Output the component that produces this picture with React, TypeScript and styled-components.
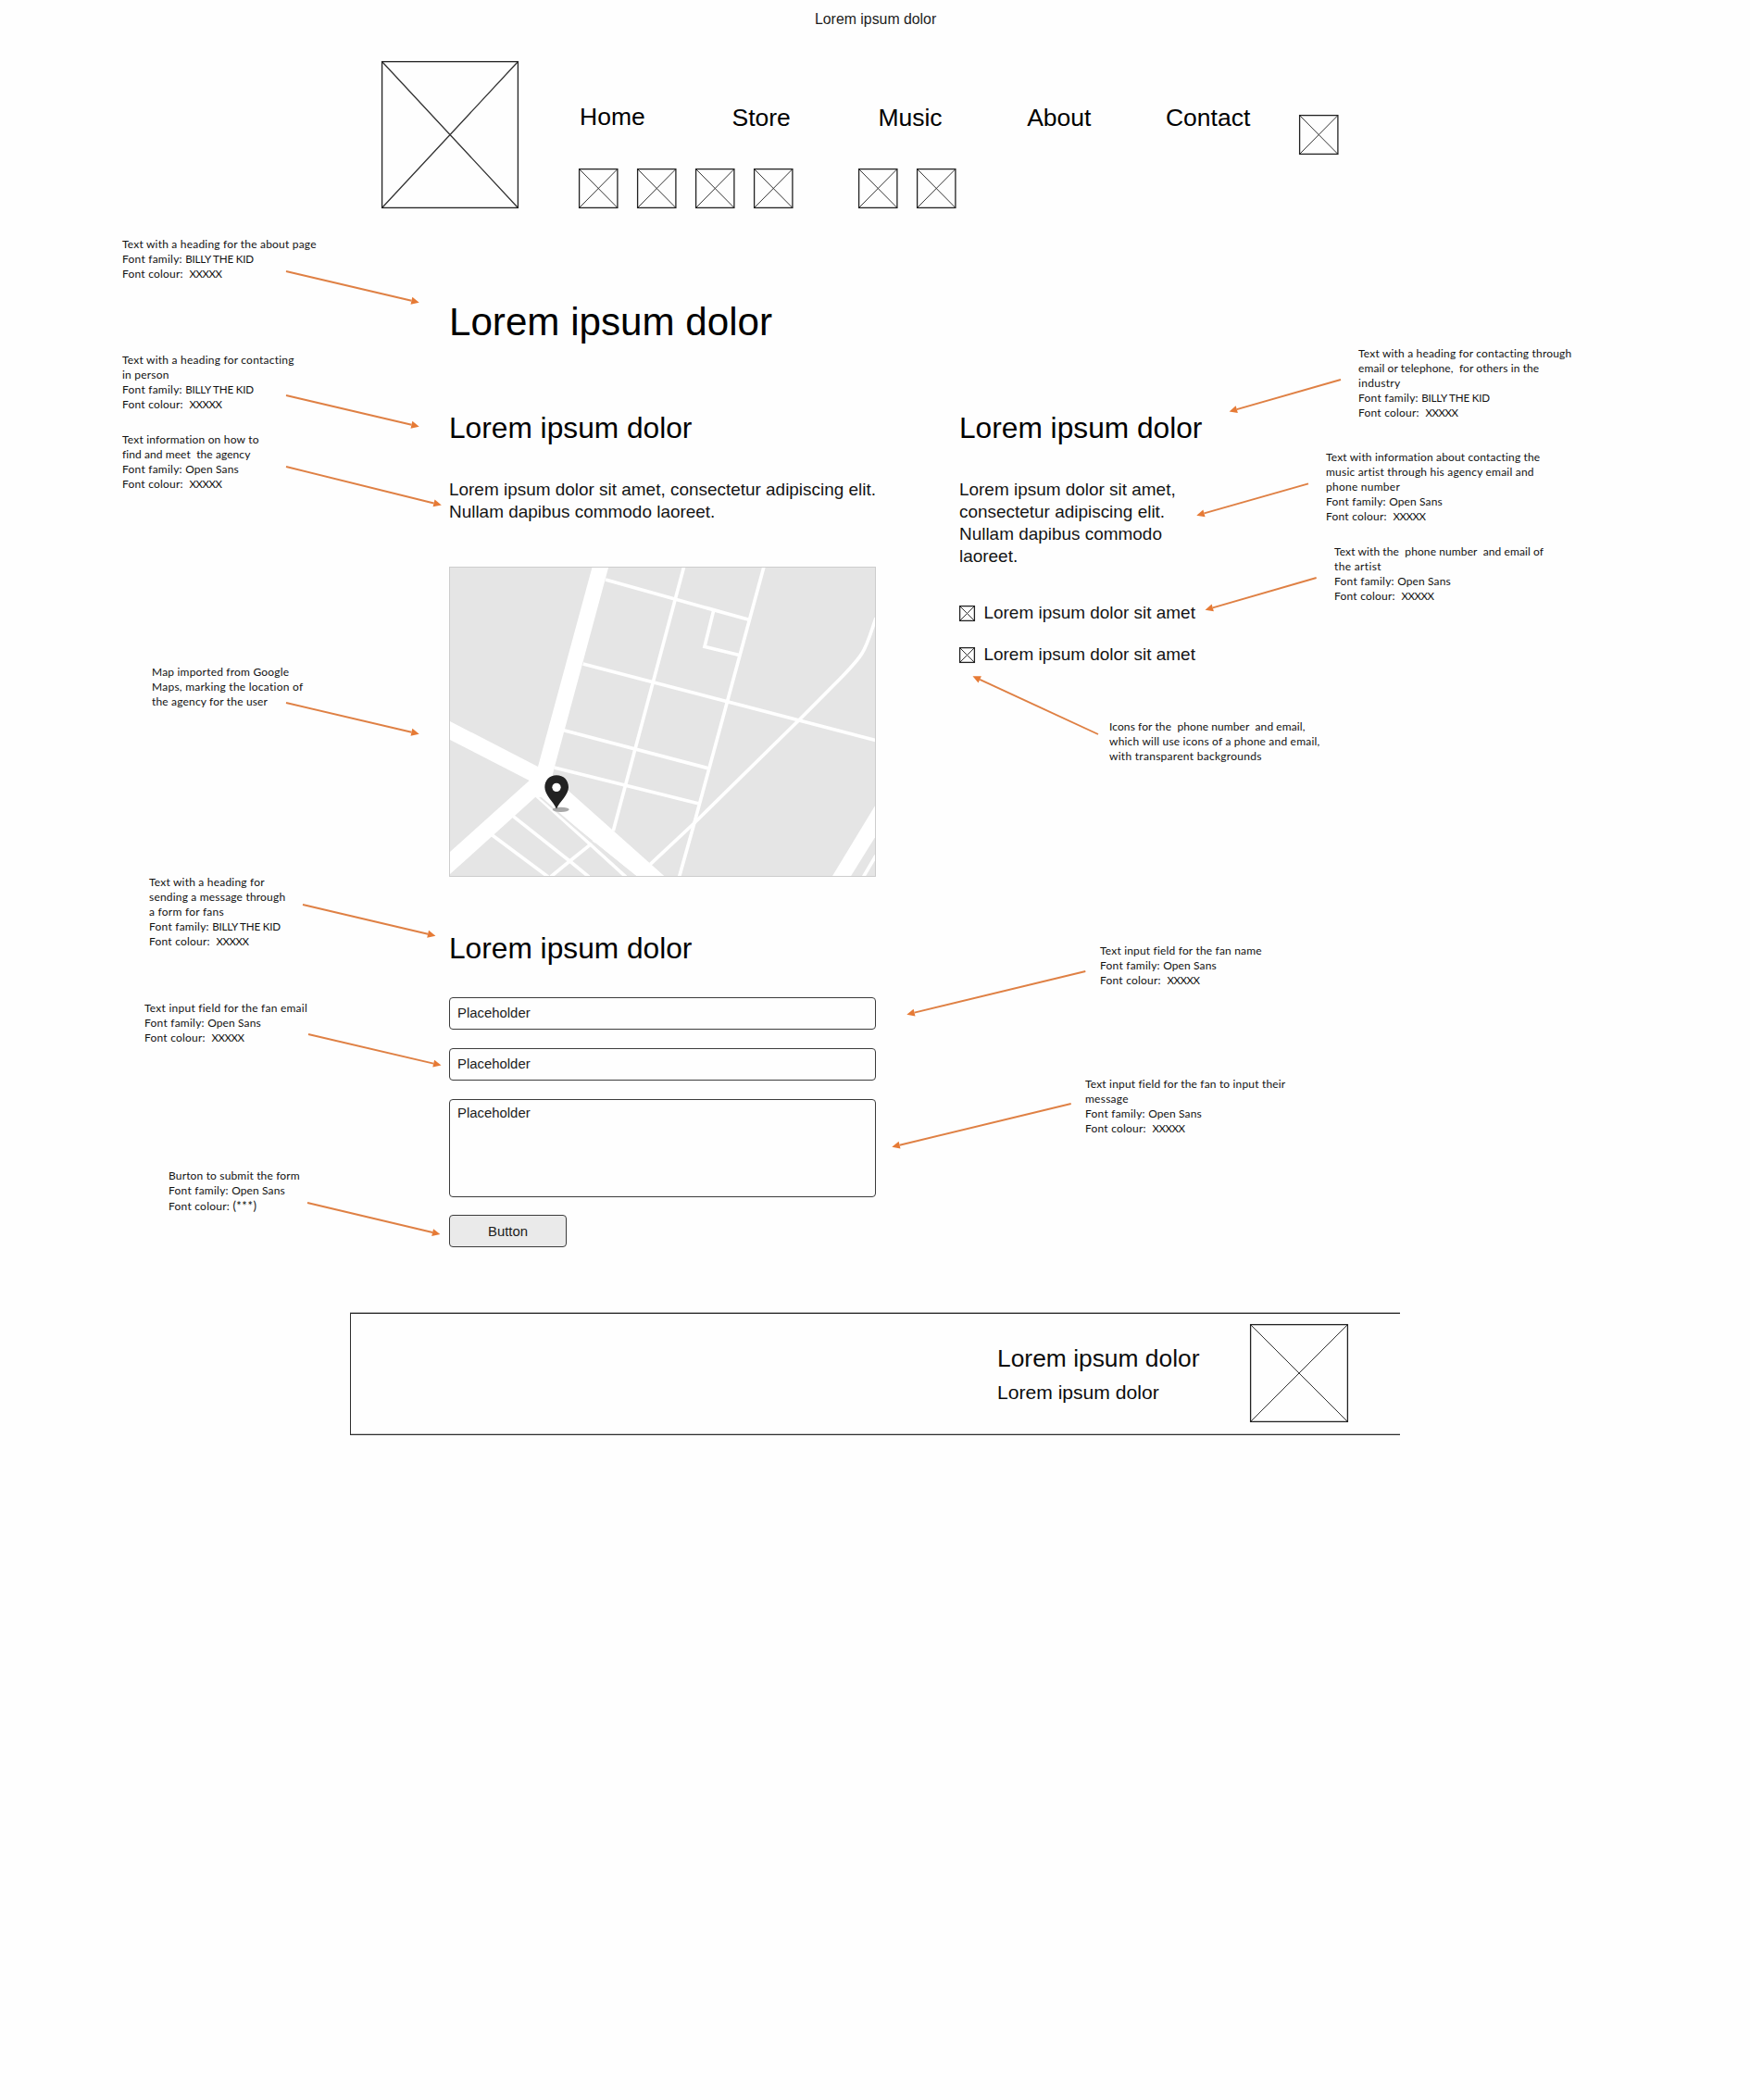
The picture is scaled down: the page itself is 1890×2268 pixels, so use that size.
import React from "react";
import styled, { createGlobalStyle } from "styled-components";

const GlobalStyle = createGlobalStyle`
  body {
    margin: 0;
    background: #fefefe;
    color: #0c0c0c;
    font-family: "Liberation Sans", Arial, sans-serif;
  }
  h1, h2, p { margin: 0; font-weight: 400; }
`;

const Page = styled.div`
  position: relative;
  width: 1890px;
  height: 2268px;
  overflow: hidden;
`;

const TitleBar = styled.div`
  box-sizing: border-box;
  height: 66px;
  padding-top: 9px;
  padding-left: 880px;
  font-size: 15.85px;
  line-height: 24px;
  color: #1c1c1c;
`;

const Header = styled.header`
  display: flex;
  align-items: flex-start;
  height: 159px;
  padding-left: 412px;
`;

const NavColumn = styled.div`
  display: flex;
  flex-direction: column;
  justify-content: space-between;
  box-sizing: border-box;
  width: 804px;
  height: 159px;
  margin-left: 21px;
  padding-top: 44px;
`;

const NavLinks = styled.nav`
  display: grid;
  grid-template-columns: repeat(5, 1fr);
  text-align: center;
  font-size: 26.5px;
  line-height: 32px;
`;

const NavLink = styled.a<{ $lift?: boolean }>`
  color: #000;
  padding-bottom: 1px;
  margin-top: ${(p) => (p.$lift ? "0" : "1px")};
`;

const IconStrip = styled.div`
  display: flex;
  padding-left: 44px;
`;

const IconGroup = styled.div<{ $gap: number }>`
  display: flex;
  gap: ${(p) => p.$gap}px;
  & + & { margin-left: 70.5px; }
`;

const HeaderAction = styled.div`
  padding-top: 58px;
  margin-left: 17.5px;
`;

const Main = styled.main`
  display: grid;
  grid-template-columns: 461px 264px;
  column-gap: 90px;
  align-items: start;
  align-content: start;
  padding: 98px 0 0 485px;
  height: 1193px;
  box-sizing: border-box;
`;

const Heading = styled.h1`
  grid-column: 1 / -1;
  height: 120px;
  font-size: 42.15px;
  line-height: 50px;
  color: #000;
`;

const Column = styled.section`
  display: flex;
  flex-direction: column;
  align-items: flex-start;
`;

const SubHeading = styled.h2<{ $height: number }>`
  height: ${(p) => p.$height}px;
  font-size: 31.7px;
  line-height: 38px;
  color: #000;
  white-space: nowrap;
`;

const Paragraph = styled.p<{ $height: number }>`
  height: ${(p) => p.$height}px;
  font-size: 18.95px;
  line-height: 24.1px;
  white-space: pre;
  color: #141414;
`;

const MapFrame = styled.div`
  width: 461px;
  height: 335px;
  margin-bottom: 58px;
  svg { display: block; }
`;

const Field = styled.div<{ $height: number; $top: number }>`
  box-sizing: border-box;
  width: 461px;
  height: ${(p) => p.$height}px;
  margin-bottom: 19.7px;
  padding: ${(p) => p.$top}px 8px;
  border: 1px solid #3c3c3c;
  border-radius: 4px;
  font-size: 14.9px;
  line-height: 24.5px;
  color: #1c1c1c;
`;

const Button = styled.button`
  box-sizing: border-box;
  width: 127px;
  height: 35px;
  padding: 0;
  border: 1px solid #3c3c3c;
  border-radius: 4px;
  background: #eaeaea;
  font: 14.9px "Liberation Sans", Arial, sans-serif;
  color: #1c1c1c;
`;

const ContactList = styled.div`
  display: flex;
  flex-direction: column;
  gap: 21px;
`;

const ContactRow = styled.div`
  display: flex;
  align-items: center;
  gap: 9.5px;
  height: 24px;
  font-size: 18.95px;
  line-height: 24px;
  color: #141414;
  white-space: nowrap;
`;

const Footer = styled.footer`
  display: flex;
  box-sizing: border-box;
  width: 1134px;
  height: 132px;
  margin-left: 378px;
  padding: 11px 56px 0 0;
  justify-content: flex-end;
  border: 1px solid #2e2e2e;
  border-right: 0;
  box-shadow: 0 -1px 0 #a8a8a8, inset 0 -1px 0 #c4c4c4;
`;

const FooterText = styled.div`
  width: 273px;
  padding-top: 21px;
  color: #0c0c0c;
`;

const FooterTitle = styled.p`
  font-size: 26.4px;
  line-height: 32px;
`;

const FooterCaption = styled.p`
  padding-top: 8px;
  font-size: 21.1px;
  line-height: 26px;
`;

const Note = styled.aside<{ $x: number; $y: number }>`
  position: absolute;
  left: ${(p) => p.$x}px;
  top: ${(p) => p.$y}px;
  font-family: Lato, Calibri, sans-serif;
  font-size: 12px;
  line-height: 16px;
  color: #111;
  white-space: pre;
`;

const NoteLine = styled.div<{ $spacing: number }>`
  height: 16px;
  letter-spacing: ${(p) => p.$spacing}px;
`;

const NoteValue = styled.span<{ $spacing: number; $size: number }>`
  font-size: ${(p) => p.$size}px;
  letter-spacing: ${(p) => p.$spacing}px;
`;

const ArrowLayer = styled.svg`
  position: absolute;
  left: 0;
  top: 0;
  pointer-events: none;
`;

const BoxSvg = styled.svg`
  display: block;
  flex: none;
  overflow: visible;
`;

function CrossBox({ w, h, thin = 1 }: { w: number; h: number; thin?: number }) {
  return (
    <BoxSvg width={w} height={h} viewBox={`0 0 ${w} ${h}`} fill="none">
      <path d={`M1 1L${w - 1} ${h - 1}M${w - 1} 1L1 ${h - 1}`} stroke="#333" strokeWidth={thin} />
      <rect x=".6" y=".6" width={w - 1.2} height={h - 1.2} stroke="#222" strokeWidth="1.3" />
    </BoxSvg>
  );
}

function CityMap() {
  return (
    <svg width="461" height="335" viewBox="45 36 1383 1005" fill="none">
      <defs>
        <clipPath id="mapArea">
          <rect x="48" y="39" width="1377" height="999" />
        </clipPath>
      </defs>
      <rect x="46.5" y="37.5" width="1380" height="1002" fill="#e5e5e5" stroke="#cdcdcd" strokeWidth="3" />
      <g clipPath="url(#mapArea)" fill="#fff">
        <path d="M509 36L562 36L387 684L380 712L436 766L745 1041L655 1041L330 778L48 1032L48 960L305 729L48 597L48 537L333 684Z" />
        <path d="M1286 1040L1428 806L1428 908L1346 1040Z" />
        <g stroke="#fff" strokeWidth="11" fill="none">
          <path d="M552 78L1016 208" />
          <path d="M479 351L1428 599" />
          <path d="M417 566L884 689" />
          <path d="M386 687L852 803" />
          <path d="M806 36L577 892" />
          <path d="M1065 36L836 880L791 1040" />
          <path d="M902 178L873 295L988 323" />
          <path d="M1428 202C1410 254 1400 290 1384 315C1368 342 1340 370 1312 399L1180 532L836 870L697 1000" />
          <path d="M326 776L505 938L618 1041" />
          <path d="M252 844L436 990L498 1041" />
          <path d="M184 905L366 1041" />
          <path d="M531 914L436 990L374 1041" />
          <path d="M1388 1040L1428 972" />
        </g>
        <path d="M345 784L505 922L655 1041L628 1041L505 931L336 783Z" fill="#e5e5e5" />
      </g>
      <ellipse cx="407" cy="823" rx="27" ry="8" fill="#a9a9a9" />
      <path
        d="M393 821C383 798 355 776 355 751C355 728 371 712 393 712C416 712 432 728 432 751C432 776 403 798 393 821Z"
        fill="#222"
      />
      <circle cx="393" cy="751" r="14" fill="#fff" />
    </svg>
  );
}

interface Line {
  text: string;
  spacing: number;
  value?: string;
  valueSpacing?: number;
  valueSize?: number;
}

const line = (text: string, spacing: number): Line => ({ text, spacing });
const BILLY: Line = { text: "Font family: ", spacing: 0.24, value: "BILLY THE KID", valueSize: 11.6, valueSpacing: -0.17 };
const OPEN: Line = { text: "Font family: ", spacing: 0.24, value: "Open Sans", valueSize: 12, valueSpacing: 0.12 };
const COLOUR: Line = { text: "Font colour:  ", spacing: 0.22, value: "XXXXX", valueSize: 11.5, valueSpacing: -0.45 };
const STARS: Line = { text: "Font colour: ", spacing: 0.24, value: "(***)", valueSize: 13, valueSpacing: 0.5 };

const notes: { x: number; y: number; lines: Line[] }[] = [
  { x: 132, y: 256, lines: [line("Text with a heading for the about page", 0.2), BILLY, COLOUR] },
  { x: 132, y: 381, lines: [line("Text with a heading for contacting", 0.22), line("in person", 0.2), BILLY, COLOUR] },
  { x: 132, y: 467, lines: [line("Text information on how to", 0.19), line("find and meet  the agency", 0.08), OPEN, COLOUR] },
  { x: 164, y: 718, lines: [line("Map imported from Google", 0.2), line("Maps, marking the location of", 0.25), line("the agency for the user", 0.17)] },
  { x: 161, y: 945, lines: [line("Text with a heading for", 0.2), line("sending a message through", 0.19), line("a form for fans", 0.25), BILLY, COLOUR] },
  { x: 156, y: 1081, lines: [line("Text input field for the fan email", 0.24), OPEN, COLOUR] },
  { x: 182, y: 1262, lines: [line("Burton to submit the form", 0.16), OPEN, STARS] },
  { x: 1467, y: 374, lines: [line("Text with a heading for contacting through", 0.18), line("email or telephone,  for others in the", 0.1), line("industry", 0.3), BILLY, COLOUR] },
  { x: 1432, y: 486, lines: [line("Text with information about contacting the", 0.16), line("music artist through his agency email and", 0.21), line("phone number", 0.25), OPEN, COLOUR] },
  { x: 1441, y: 588, lines: [line("Text with the  phone number  and email of", 0.1), line("the artist", 0.35), OPEN, COLOUR] },
  { x: 1198, y: 777, lines: [line("Icons for the  phone number  and email,", 0.09), line("which will use icons of a phone and email,", 0.2), line("with transparent backgrounds", 0.28)] },
  { x: 1188, y: 1019, lines: [line("Text input field for the fan name", 0.18), OPEN, COLOUR] },
  { x: 1172, y: 1163, lines: [line("Text input field for the fan to input their", 0.17), line("message", 0.25), OPEN, COLOUR] },
];

const arrows = [
  [309, 293, 452.7, 326.7],
  [309, 427, 452.7, 460.7],
  [309, 504, 476.8, 545.5],
  [309, 759, 452.7, 792.7],
  [327, 977, 470.4, 1010.7],
  [333, 1117, 476.5, 1150.5],
  [332, 1299, 475.4, 1333],
  [1448, 410, 1327.6, 444.4],
  [1413, 522.3, 1292.3, 556.7],
  [1421.7, 624, 1301.6, 658.7],
  [1186, 793, 1050.5, 730.3],
  [1172.3, 1049, 979.3, 1095.7],
  [1156.7, 1192, 963.3, 1238.7],
];

function Arrow({ from, to }: { from: [number, number]; to: [number, number] }) {
  const len = Math.hypot(to[0] - from[0], to[1] - from[1]);
  const ux = (to[0] - from[0]) / len;
  const uy = (to[1] - from[1]) / len;
  const bx = to[0] - ux * 8.5;
  const by = to[1] - uy * 8.5;
  return (
    <>
      <path d={`M${from[0]} ${from[1]}L${bx} ${by}`} stroke="#df8044" strokeWidth="1.9" />
      <path d={`M${to[0]} ${to[1]}L${bx - uy * 4} ${by + ux * 4}L${bx + uy * 4} ${by - ux * 4}Z`} fill="#e67a35" />
    </>
  );
}

export default function App() {
  return (
    <>
      <GlobalStyle />
      <Page>
        <TitleBar>Lorem ipsum dolor</TitleBar>
        <Header>
          <CrossBox w={148} h={159} thin={1.3} />
          <NavColumn>
            <NavLinks>
              <NavLink $lift>Home</NavLink>
              <NavLink>Store</NavLink>
              <NavLink>Music</NavLink>
              <NavLink>About</NavLink>
              <NavLink>Contact</NavLink>
            </NavLinks>
            <IconStrip>
              <IconGroup $gap={20.5}>
                <CrossBox w={42.5} h={43} />
                <CrossBox w={42.5} h={43} />
                <CrossBox w={42.5} h={43} />
                <CrossBox w={42.5} h={43} />
              </IconGroup>
              <IconGroup $gap={20.5}>
                <CrossBox w={42.5} h={43} />
                <CrossBox w={42.5} h={43} />
              </IconGroup>
            </IconStrip>
          </NavColumn>
          <HeaderAction>
            <CrossBox w={42.5} h={43} />
          </HeaderAction>
        </Header>
        <Main>
          <Heading>Lorem ipsum dolor</Heading>
          <Column>
            <SubHeading $height={74}>Lorem ipsum dolor</SubHeading>
            <Paragraph $height={95}>
              {"Lorem ipsum dolor sit amet, consectetur adipiscing elit.\nNullam dapibus commodo laoreet."}
            </Paragraph>
            <MapFrame>
              <CityMap />
            </MapFrame>
            <SubHeading $height={72.2}>Lorem ipsum dolor</SubHeading>
            <Field $height={35} $top={4}>Placeholder</Field>
            <Field $height={35} $top={4}>Placeholder</Field>
            <Field $height={106} $top={2}>Placeholder</Field>
            <Button>Button</Button>
          </Column>
          <Column>
            <SubHeading $height={74}>Lorem ipsum dolor</SubHeading>
            <Paragraph $height={133}>
              {"Lorem ipsum dolor sit amet,\nconsectetur adipiscing elit.\nNullam dapibus commodo\nlaoreet."}
            </Paragraph>
            <ContactList>
              <ContactRow>
                <CrossBox w={17} h={17} />
                Lorem ipsum dolor sit amet
              </ContactRow>
              <ContactRow>
                <CrossBox w={17} h={17} />
                Lorem ipsum dolor sit amet
              </ContactRow>
            </ContactList>
          </Column>
        </Main>
        <Footer>
          <FooterText>
            <FooterTitle>Lorem ipsum dolor</FooterTitle>
            <FooterCaption>Lorem ipsum dolor</FooterCaption>
          </FooterText>
          <CrossBox w={106} h={106} />
        </Footer>
        {notes.map((n) => (
          <Note key={`${n.x}-${n.y}`} $x={n.x} $y={n.y}>
            {n.lines.map((l) => (
              <NoteLine key={l.text} $spacing={l.spacing}>
                {l.text}
                {l.value && (
                  <NoteValue $size={l.valueSize ?? 12} $spacing={l.valueSpacing ?? 0}>{l.value}</NoteValue>
                )}
              </NoteLine>
            ))}
          </Note>
        ))}
        <ArrowLayer width="1890" height="2268" viewBox="0 0 1890 2268" fill="none">
          {arrows.map(([x1, y1, x2, y2]) => (
            <Arrow key={`${x1}-${y1}`} from={[x1, y1]} to={[x2, y2]} />
          ))}
        </ArrowLayer>
      </Page>
    </>
  );
}
